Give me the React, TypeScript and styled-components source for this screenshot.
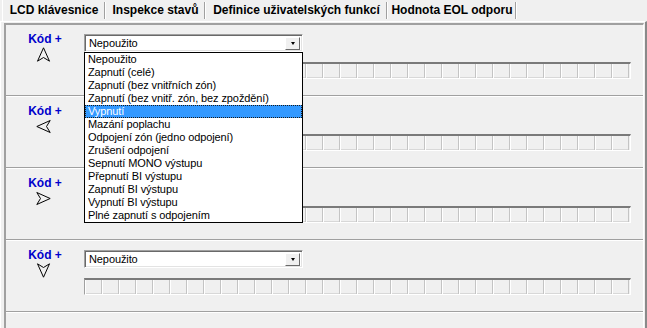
import React from "react";
import styled, { createGlobalStyle } from "styled-components";

const Global = createGlobalStyle`
  html, body { margin: 0; padding: 0; background: #f0f0f0; }
  body { font-family: "Liberation Sans", Arial, sans-serif; }
`;

const Window = styled.div`
  width: 647px;
  height: 328px;
  overflow: hidden;
  background: #f0f0f0;
  display: flex;
  flex-direction: column;
  position: relative;
`;

const TabStrip = styled.div`
  display: flex;
  height: 21px;
  padding-left: 2px;
  box-sizing: border-box;
`;

const Tab = styled.div<{ $w: number; $first?: boolean }>`
  width: ${(p) => p.$w}px;
  height: 21px;
  box-sizing: border-box;
  display: flex;
  align-items: center;
  justify-content: center;
  font: bold 12px "Liberation Sans", Arial, sans-serif;
  color: #000;
  padding-bottom: 2px;
  border-left: 1px solid ${(p) => (p.$first ? "#ffffff" : "transparent")};
  position: relative;
  &::after {
    content: "";
    position: absolute;
    right: 0;
    top: 2px;
    bottom: 2px;
    width: 1px;
    background: #a0a0a0;
    box-shadow: 1px 0 0 #ffffff;
  }
`;

const Page = styled.div`
  flex: 1;
  border-top: 1px solid #ffffff;
  border-left: 1px solid #ffffff;
  border-right: 2px solid #8a8a8a;
  padding: 1px 1px 0 3px;
  display: flex;
  flex-direction: column;
  min-height: 0;
`;

const Frame = styled.div`
  flex: 1;
  border-top: 2px solid #a0a0a0;
  border-left: 2px solid #a0a0a0;
  border-right: 1px solid #ffffff;
  position: relative;
`;

const Section = styled.div`
  height: 72px;
  box-sizing: border-box;
  border-bottom: 1px solid #ffffff;
  box-shadow: inset 0 -1px 0 #a0a0a0;
  display: grid;
  grid-template-columns: 78px 1fr;
  padding-top: 8px;
`;

const LabelCol = styled.div`
  display: flex;
  flex-direction: column;
  align-items: center;
  gap: 1px;
`;

const KodLabel = styled.div`
  font: bold 12px "Liberation Sans", Arial, sans-serif;
  color: #0000cc;
  line-height: 13px;
  height: 13px;
`;

const Content = styled.div`
  display: flex;
  flex-direction: column;
  gap: 10px;
  padding-top: 1px;
  position: relative;
`;

const Combo = styled.div`
  width: 219px;
  height: 18px;
  box-sizing: border-box;
  background: #ffffff;
  border-top: 1px solid #a0a0a0;
  border-left: 1px solid #a0a0a0;
  border-right: 1px solid #ffffff;
  border-bottom: 1px solid #ffffff;
  box-shadow: inset 1px 1px 0 #696969, inset -1px -1px 0 #e3e3e3;
  display: flex;
  align-items: center;
  justify-content: space-between;
  padding: 0 2px 0 4px;
  font: 11px "Liberation Sans", Arial, sans-serif;
  letter-spacing: -0.1px;
  color: #000;
`;

const DropButton = styled.div`
  width: 15px;
  height: 13px;
  box-sizing: border-box;
  background: #f0f0f0;
  border-top: 1px solid #ffffff;
  border-left: 1px solid #ffffff;
  border-right: 1px solid #696969;
  border-bottom: 1px solid #696969;
  display: flex;
  align-items: center;
  justify-content: center;
`;

const Caret = styled.div`
  width: 0;
  height: 0;
  border-left: 2.5px solid transparent;
  border-right: 2.5px solid transparent;
  border-top: 3px solid #000;
  margin-top: 1px;
`;

const CodeField = styled.div`
  width: 547px;
  height: 17px;
  box-sizing: border-box;
  border-top: 2px solid #7a7a7a;
  border-left: 1px solid #a0a0a0;
  border-right: 1px solid #ffffff;
  border-bottom: 1px solid #ffffff;
  display: flex;
  background: #f0f0f0;
`;

const Cell = styled.div`
  width: 17px;
  flex: none;
  box-sizing: border-box;
  border-right: 1px solid #c4c4c4;
  box-shadow: inset 1px 0 0 #ffffff, inset 0 -1px 0 #d8d8d8;
`;

const List = styled.div`
  position: absolute;
  left: 0;
  top: 19px;
  width: 219px;
  box-sizing: border-box;
  border: 1px solid #000;
  background: #ffffff;
  z-index: 5;
  padding: 0;
`;

const Item = styled.div<{ $sel?: boolean }>`
  height: 13px;
  line-height: 13px;
  padding-left: 3px;
  font: 11px "Liberation Sans", Arial, sans-serif;
  letter-spacing: -0.1px;
  white-space: nowrap;
  color: ${(p) => (p.$sel ? "#ffffff" : "#000000")};
  background: ${(p) => (p.$sel ? "#3399ff" : "transparent")};
  outline: ${(p) => (p.$sel ? "1px dotted #1a1a1a" : "none")};
  outline-offset: -1px;
`;

const ArrowSvg = styled.svg`
  display: block;
  margin-right: 3px;
`;

type Dir = "up" | "left" | "right" | "down";

const arrowPaths: Record<Dir, string> = {
  up: "M7.5 0.8 L13.5 14.2 L7.5 10.5 L1.5 14.2 Z",
  down: "M7.5 14.2 L13.5 0.8 L7.5 4.5 L1.5 0.8 Z",
  left: "M0.8 7.5 L14.2 1.5 L10.5 7.5 L14.2 13.5 Z",
  right: "M14.2 7.5 L0.8 1.5 L4.5 7.5 L0.8 13.5 Z",
};

const Arrow = ({ dir }: { dir: Dir }) => (
  <ArrowSvg width="15" height="15" viewBox="0 0 15 15">
    <path d={arrowPaths[dir]} fill="none" stroke="#000" strokeWidth="1" strokeLinejoin="miter" />
  </ArrowSvg>
);

const options = [
  "Nepoužito",
  "Zapnutí (celé)",
  "Zapnutí (bez vnitřních zón)",
  "Zapnutí (bez vnitř. zón, bez zpoždění)",
  "Vypnutí",
  "Mazání poplachu",
  "Odpojení zón (jedno odpojení)",
  "Zrušení odpojení",
  "Sepnutí MONO výstupu",
  "Přepnutí BI výstupu",
  "Zapnutí BI výstupu",
  "Vypnutí BI výstupu",
  "Plné zapnutí s odpojením",
];

const tabs = [
  { label: "LCD klávesnice", w: 103 },
  { label: "Inspekce stavů", w: 100 },
  { label: "Definice uživatelských funkcí", w: 182 },
  { label: "Hodnota EOL odporu", w: 129 },
];

const dirs: Dir[] = ["up", "left", "right", "down"];

export default function App() {
  return (
    <>
      <Global />
      <Window>
        <TabStrip>
          {tabs.map((t, i) => (
            <Tab key={t.label} $w={t.w} $first={i === 0}>
              {t.label}
            </Tab>
          ))}
        </TabStrip>
        <Page>
          <Frame>
            {dirs.map((d, si) => (
              <Section key={d}>
                <LabelCol>
                  <KodLabel>Kód +</KodLabel>
                  <Arrow dir={d} />
                </LabelCol>
                <Content>
                  <Combo>
                    <span>Nepoužito</span>
                    <DropButton>
                      <Caret />
                    </DropButton>
                  </Combo>
                  <CodeField>
                    {Array.from({ length: 32 }).map((_, ci) => (
                      <Cell key={ci} />
                    ))}
                  </CodeField>
                  {si === 0 && (
                    <List>
                      {options.map((o) => (
                        <Item key={o} $sel={o === "Vypnutí"}>
                          {o}
                        </Item>
                      ))}
                    </List>
                  )}
                </Content>
              </Section>
            ))}
          </Frame>
        </Page>
      </Window>
    </>
  );
}
